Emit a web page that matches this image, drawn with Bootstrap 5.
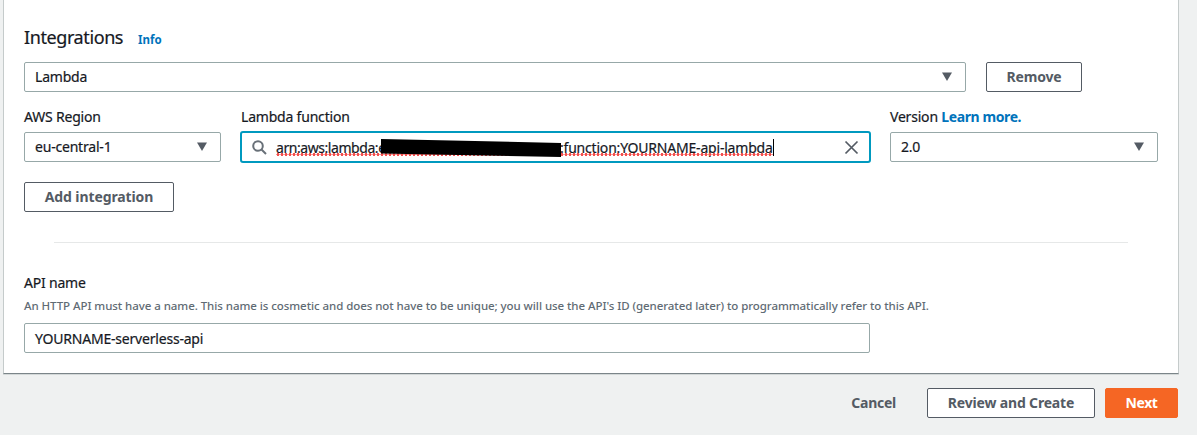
<!DOCTYPE html>
<html lang="en">
<head>
<meta charset="utf-8">
<title>Create an API</title>
<link href="https://cdn.jsdelivr.net/npm/bootstrap@5.3.0/dist/css/bootstrap.min.css" rel="stylesheet">
<style>
body{background:#eff1f1;color:#16191f;font-family:"Noto Sans","Open Sans",sans-serif;font-size:14px;line-height:20px;letter-spacing:-.2px;height:435px;overflow:hidden;-webkit-text-stroke:.2px}
.panel{width:1176px;height:374px;margin-left:3px;background:#fff;border:solid #c5cbcb;border-width:0 1px;border-bottom:1px solid #7b8589;box-shadow:0 1px 0 #d3d8d8;padding:26px 20px 0}
h2{font-size:18px;line-height:22px;font-weight:400;letter-spacing:-.4px}
a{color:#0073bb;font-weight:700;text-decoration:none;letter-spacing:-.4px;-webkit-text-stroke:0}
.info-link{font-size:11.5px;letter-spacing:0;margin-left:15px}
.field{height:30px;border:1px solid #97a8a8;border-radius:2px;padding:0 12px 0 10px;background:#fff}
.field.focused{height:32px;border:2px solid #0099bf;border-radius:3px;margin:-1px;padding:0 10px}
.row-gap{gap:20px}
.fields-row{margin-top:15px}
.field-label{margin-bottom:5px}
.w-type{width:942px}.w-region{width:197px}.w-fn{width:629px}.w-ver{width:268px}.w-name{width:846px;margin-top:9px;padding-top:2px}
.btn{height:30px;border-radius:2px;border:1px solid #545b64;background:#fff;color:#545b64;font-weight:700;font-size:14px;line-height:20px;padding:4px 0;white-space:nowrap;letter-spacing:-.1px;-webkit-text-stroke:0}
.btn-main{background:#f56624;border-color:#f56624;color:#fff;width:73px;letter-spacing:-.4px}
.btn-plain{background:none;border-color:transparent;letter-spacing:-.25px}
.btn-add{margin-top:20px;width:150px}
.btn-remove{width:96px;letter-spacing:-.2px}
.btn-review{width:168px;margin:0 10px 0 30px;letter-spacing:-.17px}
.rule{height:1px;background:#e6e8e8;margin:30px 30px 0}
.api-label{margin-top:30px}
.hint{margin-top:5px;font-size:11.5px;line-height:16px;color:#5f6b74;font-weight:500;letter-spacing:-.063px;-webkit-text-stroke:0;white-space:nowrap}
.arn{width:498px;height:20px;margin-left:9px;padding-top:1px;white-space:nowrap}
.arn:before{content:"";position:absolute;right:0;top:2px;width:1px;height:17px;background:#000}
.arn:after{content:"";position:absolute;left:0;right:1px;top:16px;height:3px;background:radial-gradient(circle,#f4504e 1.3px,transparent 1.8px) 0 0/4px 3px}
.arn svg{position:absolute;left:105px;top:2px;z-index:1}
.arn-head{width:284px;letter-spacing:-.44px}
.footer-bar{margin:14px 19px 0 0}
</style>
</head>
<body>
<main class="panel">
  <div class="d-flex align-items-baseline"><h2 class="mb-0">Integrations</h2><a class="info-link" href="#">Info</a></div>
  <div class="d-flex mt-1 pt-2 row-gap">
    <div class="field w-type d-flex align-items-center justify-content-between"><span>Lambda</span><svg width="12" height="10"><path d="M1 .5h10L6 9z" fill="#545b64"/></svg></div>
    <button class="btn btn-remove">Remove</button>
  </div>
  <div class="d-flex row-gap fields-row">
    <div class="w-region flex-shrink-0"><div class="field-label">AWS Region</div>
      <div class="field d-flex align-items-center justify-content-between"><span>eu-central-1</span><svg width="12" height="10"><path d="M1 .5h10L6 9z" fill="#545b64"/></svg></div></div>
    <div class="w-fn flex-shrink-0"><div class="field-label">Lambda function</div>
      <div class="field focused d-flex align-items-center">
        <svg width="15" height="15" fill="none" stroke="#687078" stroke-width="2"><circle cx="6" cy="6" r="4.8"/><path d="M9.5 9.5 14 14"/></svg>
        <div class="arn d-flex position-relative"><span class="arn-head">arn:aws:lambda:e</span><span>:function:YOURNAME-api-lambda</span>
          <svg width="181" height="20"><path d="M0 0 180 4v14L0 14.500z"/></svg></div>
        <svg class="ms-auto" width="15" height="15" fill="none" stroke="#545b64" stroke-width="1.7"><path d="m1.500 1.500 12 12m0-12-12 12"/></svg>
      </div></div>
    <div class="w-ver flex-shrink-0"><div class="field-label">Version <a href="#">Learn more.</a></div>
      <div class="field d-flex align-items-center justify-content-between"><span>2.0</span><svg width="12" height="10"><path d="M1 .5h10L6 9z" fill="#545b64"/></svg></div></div>
  </div>
  <button class="btn btn-add d-block">Add integration</button>
  <div class="rule"></div>
  <div class="api-label">API name</div>
  <div class="hint">An HTTP API must have a name. This name is cosmetic and does not have to be unique; you will use the API's ID (generated later) to programmatically refer to this API.</div>
  <div class="field w-name d-flex align-items-center"><span>YOURNAME-serverless-api</span></div>
</main>
<footer class="d-flex justify-content-end footer-bar">
  <button class="btn btn-plain">Cancel</button>
  <button class="btn btn-review">Review and Create</button>
  <button class="btn btn-main">Next</button>
</footer>
<script src="https://cdn.jsdelivr.net/npm/bootstrap@5.3.0/dist/js/bootstrap.bundle.min.js"></script>
</body>
</html>
